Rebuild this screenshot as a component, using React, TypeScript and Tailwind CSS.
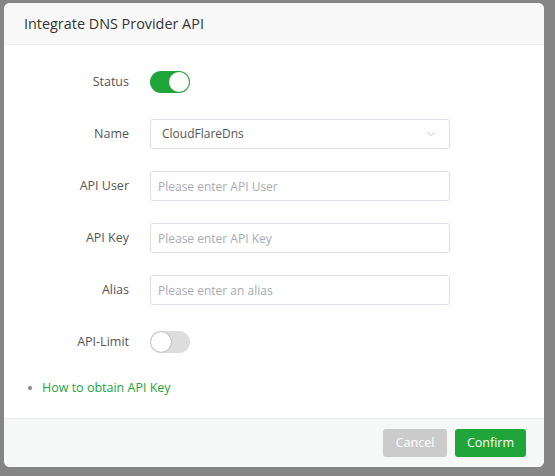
import { ChevronDown } from 'lucide-react'

function Toggle({ on }: { on: boolean }) {
  return (
    <div
      className={`relative w-[40px] h-[22px] rounded-full ${on ? 'bg-[#20a53a]' : 'bg-[#dddddd]'}`}
    >
      <div
        className={`absolute top-[1px] w-[20px] h-[20px] rounded-full bg-white ${
          on ? 'left-[19px]' : 'left-[1px] shadow-[0_0_2px_rgba(0,0,0,0.35)]'
        }`}
      />
    </div>
  )
}

function Row({ label, children }: { label: string; children: React.ReactNode }) {
  return (
    <div className="flex items-center h-[30px] gap-[21px]">
      <span className="w-[125px] text-right text-[12.5px] text-[#555]">{label}</span>
      {children}
    </div>
  )
}

function TextInput({ placeholder }: { placeholder: string }) {
  return (
    <input
      className="w-[300px] h-[30px] px-[7px] text-[12px] text-[#555] border border-[#dcdfe6] rounded-[3px] outline-none placeholder:text-[#a8abb2]"
      placeholder={placeholder}
    />
  )
}

export default function App() {
  return (
    <div
      className="w-[555px] h-[476px] bg-[#858585] pt-[3px] pl-[4px]"
      style={{ fontFamily: '"Open Sans", "Noto Sans", sans-serif' }}
    >
      <div className="w-[540px] h-[464px] bg-white rounded-[6px] overflow-hidden flex flex-col">
        <div className="h-[42px] shrink-0 bg-[#f8f8f8] border-b border-[#eeeeee] flex items-center pl-[20px] text-[14.4px] text-[#333]">
          Integrate DNS Provider API
        </div>

        <div className="flex-1 pt-[22px] flex flex-col gap-[22px]">
          <Row label="Status">
            <Toggle on />
          </Row>
          <Row label="Name">
            <div className="w-[300px] h-[30px] px-[11px] flex items-center justify-between text-[12px] text-[#555] border border-[#dcdfe6] rounded-[3px]">
              <span>CloudFlareDns</span>
              <ChevronDown size={14} strokeWidth={1.2} className="text-[#b0b3b8]" />
            </div>
          </Row>
          <Row label="API User">
            <TextInput placeholder="Please enter API User" />
          </Row>
          <Row label="API Key">
            <TextInput placeholder="Please enter API Key" />
          </Row>
          <Row label="Alias">
            <TextInput placeholder="Please enter an alias" />
          </Row>
          <Row label="API-Limit">
            <Toggle on={false} />
          </Row>
          <div className="flex items-center gap-[10px] pl-[24px]">
            <span className="w-[4px] h-[4px] rounded-full bg-[#888]" />
            <a className="text-[12.5px] text-[#20a53a]">How to obtain API Key</a>
          </div>
        </div>

        <div className="h-[49px] shrink-0 bg-[#f6f7f7] border-t border-[#eeeeee] flex items-center justify-end gap-[8px] pr-[18px]">
          <button className="h-[28px] w-[64px] rounded-[3px] bg-[#cbcbcb] text-white text-[12.5px]">
            Cancel
          </button>
          <button className="h-[28px] w-[71px] rounded-[3px] bg-[#20a53a] text-white text-[12.5px]">
            Confirm
          </button>
        </div>
      </div>
    </div>
  )
}
